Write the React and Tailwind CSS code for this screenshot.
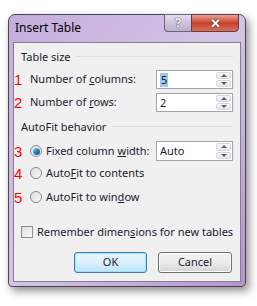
import React from 'react';

const font = "font-['Noto_Sans',sans-serif]";

const Num = ({ n }) => (
    <span className="w-[16px] shrink-0 font-['Liberation_Sans',sans-serif] text-[15px] leading-none text-[#ff0000]">{n}</span>
);

const Spin = ({ value, selected }) => (
    <div className="w-[77px] h-full flex items-center border border-[#a5a5a5] bg-white">
        <div className="flex-1 pl-[3px] flex items-center">
            <span className={selected ? 'bg-[#99c9f1] px-[1px] leading-[14px]' : 'leading-[14px]'}>{value}</span>
        </div>
        <div className="w-[15px] h-full flex flex-col gap-[1px] py-[1px] mr-[1px]">
            <div className="flex-1 flex items-center justify-center border border-[#d4d7dd] bg-gradient-to-b from-[#f7f7f7] to-[#e6e6e6] rounded-[2px]">
                <div className="w-0 h-0 border-l-[3px] border-r-[3px] border-b-[3px] border-l-transparent border-r-transparent border-b-[#4c607f]" />
            </div>
            <div className="flex-1 flex items-center justify-center border border-[#d4d7dd] bg-gradient-to-b from-[#f7f7f7] to-[#e6e6e6] rounded-[2px]">
                <div className="w-0 h-0 border-l-[3px] border-r-[3px] border-t-[3px] border-l-transparent border-r-transparent border-t-[#4c607f]" />
            </div>
        </div>
    </div>
);

const Radio = ({ checked }) => (
    <div className="w-[12px] h-[12px] shrink-0 rounded-full border border-[#8a8a8a] bg-gradient-to-br from-[#dedede] to-[#fbfbfb] flex items-center justify-center">
        {checked && <div className="w-[7px] h-[7px] rounded-full bg-gradient-to-br from-[#8fd0f5] via-[#2f7fc4] to-[#103f78]" />}
    </div>
);

const Header = ({ label }) => (
    <div className="h-[16px] flex items-center pl-[7px] pr-[7px] gap-[6px]">
        <span>{label}</span>
        <div className="flex-1 h-px bg-[#d5dfe5] -mt-[2px]" />
    </div>
);

const App = () => {
    return (
        <div className={`w-[257px] h-[306px] bg-white pt-[14px] pl-[8px] text-[11px] text-[#1b1b2e] ${font}`}>
            <div className="w-[238px] h-[273px] flex flex-col rounded-t-[7px] rounded-b-[4px] border border-[#4b4552] bg-gradient-to-br from-[#c4acdc] via-[#d4c5e6] to-[#b393d1] shadow-[3px_4px_8px_rgba(0,0,0,0.45)]">
                {/* title bar */}
                <div className="h-[27px] flex items-start justify-between">
                    <span className="pl-[6px] pt-[4px] text-[12px] text-black">Insert Table</span>
                    <div className="flex mr-[6px] -mt-px">
                        <div className="w-[27px] h-[18px] flex items-center justify-center rounded-bl-[4px] border border-[#6d647a] border-r-0 bg-gradient-to-b from-[#e4dcee] via-[#cfc3df] to-[#bcaed0]">
                            <span className="font-['Liberation_Sans',sans-serif] font-bold text-[12px] text-white [text-shadow:0_0_1px_#333,0_0_1px_#333]">?</span>
                        </div>
                        <div className="w-[48px] h-[18px] flex items-center justify-center rounded-br-[4px] border border-[#5d3f3f] bg-gradient-to-b from-[#e6a195] via-[#c7402c] to-[#d66e5b]">
                            <span className="font-['Liberation_Sans',sans-serif] font-bold text-[13px] leading-none text-white [text-shadow:0_0_1px_#222,0_0_1px_#222]">✕</span>
                        </div>
                    </div>
                </div>

                {/* client area */}
                <div className="flex-1 mx-[4px] mb-[4px] bg-[#f0f0f0] border border-[#857e8e] flex flex-col pt-[6px]">
                    <Header label="Table size" />

                    <div className="h-[19px] mt-[5px] flex items-center pr-[7px]">
                        <Num n="1" />
                        <span className="flex-1">Number of <u>c</u>olumns:</span>
                        <Spin value="5" selected />
                    </div>
                    <div className="h-[19px] mt-[4px] flex items-center pr-[7px]">
                        <Num n="2" />
                        <span className="flex-1">Number of <u>r</u>ows:</span>
                        <Spin value="2" />
                    </div>

                    <div className="mt-[7px]">
                        <Header label="AutoFit behavior" />
                    </div>

                    <div className="h-[20px] mt-[6px] flex items-center pr-[7px]">
                        <Num n="3" />
                        <Radio checked />
                        <span className="flex-1 ml-[4px]">Fixed column <u>w</u>idth:</span>
                        <Spin value="Auto" />
                    </div>
                    <div className="h-[20px] mt-[2px] flex items-center">
                        <Num n="4" />
                        <Radio />
                        <span className="ml-[4px]">Auto<u>F</u>it to contents</span>
                    </div>
                    <div className="h-[20px] mt-[4px] flex items-center">
                        <Num n="5" />
                        <Radio />
                        <span className="ml-[4px]">AutoFit to win<u>d</u>ow</span>
                    </div>

                    <div className="h-[20px] mt-[15px] flex items-center pl-[7px] gap-[4px]">
                        <div className="w-[12px] h-[12px] border border-[#8e8f8f] bg-gradient-to-br from-[#dcdcdc] to-[#fafafa]" />
                        <span>Remember dimen<u>s</u>ions for new tables</span>
                    </div>

                    <div className="mt-[10px] flex justify-end gap-[11px] pr-[8px]">
                        <button className="w-[73px] h-[21px] rounded-[3px] border border-[#3c7fb1] bg-gradient-to-b from-[#eaf6fd] via-[#d9f0fc] to-[#bee6fd] shadow-[inset_0_0_0_1px_#9fe0fb]">OK</button>
                        <button className="w-[74px] h-[21px] rounded-[3px] border border-[#707070] bg-gradient-to-b from-[#f2f2f2] via-[#ebebeb] to-[#d4d4d4] shadow-[inset_0_0_0_1px_#fcfcfc]">Cancel</button>
                    </div>
                </div>
            </div>
        </div>
    );
};

export default App;
